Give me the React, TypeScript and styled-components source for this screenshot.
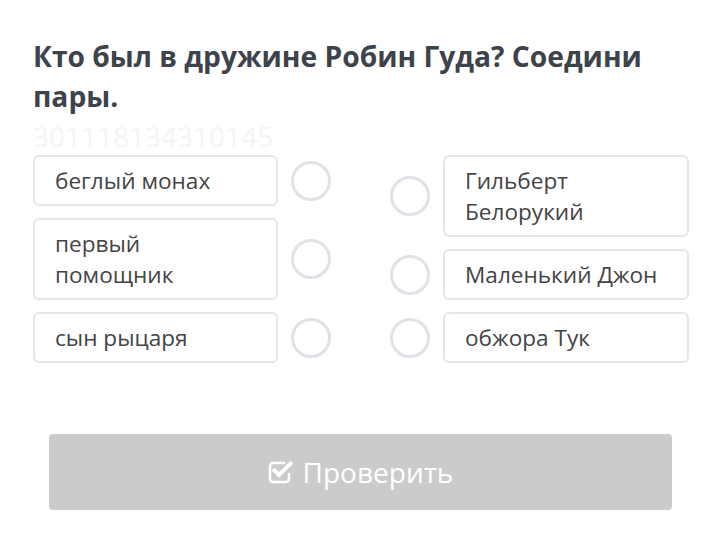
import React from 'react';
import styled, { createGlobalStyle } from 'styled-components';

const GlobalStyle = createGlobalStyle`
  html, body {
    margin: 0;
    padding: 0;
    background: #ffffff;
  }
  body {
    font-family: "Open Sans", "Noto Sans", sans-serif;
  }
`;

const Page = styled.div`
  width: 707px;
  box-sizing: border-box;
  padding: 36px 18px 0 33px;
`;

const Question = styled.h2`
  margin: 0;
  font-size: 28.2px;
  line-height: 40px;
  font-weight: 700;
  color: #3d434a;
`;

const Watermark = styled.div`
  font-size: 28px;
  line-height: 40px;
  color: #f4f4f4;
  height: 39px;
`;

const Board = styled.div`
  display: flex;
  justify-content: space-between;
  align-items: flex-start;
`;

const Side = styled.div`
  display: flex;
  flex-direction: column;
  gap: 12px;
`;

const Row = styled.div<{ $reverse?: boolean }>`
  display: flex;
  flex-direction: ${p => (p.$reverse ? 'row-reverse' : 'row')};
  align-items: center;
  gap: 13px;
`;

const Option = styled.div<{ $width: number }>`
  width: ${p => p.$width}px;
  box-sizing: border-box;
  padding: 8px 20px;
  border: 2px solid #e4e7ea;
  border-radius: 6px;
  font-size: 22.6px;
  line-height: 31px;
  color: #444444;
`;

const Dot = styled.div`
  width: 40px;
  height: 40px;
  box-sizing: border-box;
  border: 3px solid #dfe3e7;
  border-radius: 50%;
  flex-shrink: 0;
`;

const CheckButton = styled.button`
  margin: 71px 17px 0 16px;
  width: calc(100% - 33px);
  height: 76px;
  border: none;
  border-radius: 4px;
  background: #cbcbcb;
  color: #ffffff;
  font-family: "Open Sans", "Noto Sans", sans-serif;
  font-size: 28px;
  display: flex;
  align-items: center;
  justify-content: center;
  gap: 9px;

  svg {
    width: 26px;
    height: 25px;
    margin-top: -2px;
  }
`;

// check-square-o: open rounded box with a bold tick leaving its corner
const CheckIcon = () => (
  <svg viewBox="0 0 26 25" fill="none" stroke="#ffffff">
    <path
      d="M16 4 H5 a3 3 0 0 0 -3 3 v13 a3 3 0 0 0 3 3 h13 a3 3 0 0 0 3 -3 v-5"
      strokeWidth="2.6"
      strokeLinecap="round"
    />
    <path d="M6.5 11.5 L11 16 L22.5 4.5" strokeWidth="4" strokeLinecap="square" />
  </svg>
);

const left = ['беглый монах', 'первый помощник', 'сын рыцаря'];
const right = ['Гильберт Белорукий', 'Маленький Джон', 'обжора Тук'];

export default function App() {
  return (
    <Page>
      <GlobalStyle />
      <Question>Кто был в дружине Робин Гуда? Соедини пары.</Question>
      <Watermark>301118134310145</Watermark>
      <Board>
        <Side>
          {left.map(text => (
            <Row key={text}>
              <Option $width={245}>{text}</Option>
              <Dot />
            </Row>
          ))}
        </Side>
        <Side>
          {right.map(text => (
            <Row key={text} $reverse>
              <Option $width={246}>{text}</Option>
              <Dot />
            </Row>
          ))}
        </Side>
      </Board>
      <CheckButton>
        <CheckIcon />
        Проверить
      </CheckButton>
    </Page>
  );
}
